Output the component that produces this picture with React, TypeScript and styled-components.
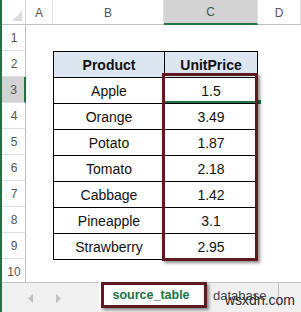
import React from "react";
import styled, { createGlobalStyle } from "styled-components";

const Global = createGlobalStyle`
  html, body { margin: 0; padding: 0; background: #ffffff; overflow: hidden; }
  body { font-family: "Liberation Sans", Arial, sans-serif; }
`;

const GREEN = "#217346";
const RED = "#5e1a1f";

const Page = styled.div`
  position: relative;
  width: 301px;
  height: 312px;
  box-sizing: border-box;
  border-left: 2px solid ${GREEN};
  display: flex;
  flex-direction: column;
  overflow: hidden;
  background: #ffffff;
`;

const Sheet = styled.div`
  height: 282px;
  flex: none;
  display: grid;
  grid-template-columns: 24px 27px 111px 94px 1fr;
  grid-template-rows: 25px repeat(10, 26px);
  overflow: hidden;
`;

const Corner = styled.div`
  grid-column: 1;
  grid-row: 1;
  box-sizing: border-box;
  border-bottom: 1px solid #bdbdbd;
  border-right: 1px solid #d4d4d4;
  background: #ffffff;
  display: flex;
  align-items: flex-end;
  justify-content: flex-end;
  padding: 0 3px 3px 0;
`;

const ColHead = styled.div<{ $col: number; $sel?: boolean }>`
  grid-column: ${(p) => p.$col};
  grid-row: 1;
  box-sizing: border-box;
  border-right: 1px solid #e0e0e0;
  border-bottom: ${(p) => (p.$sel ? `2px solid ${GREEN}` : "1px solid #bdbdbd")};
  background: ${(p) => (p.$sel ? "#d3d3d3" : "#ffffff")};
  color: ${(p) => (p.$sel ? "#3b5e4a" : "#555555")};
  font-size: 12px;
  display: flex;
  align-items: center;
  justify-content: center;
  padding-top: 1px;
`;

const RowHead = styled.div<{ $row: number; $sel?: boolean }>`
  grid-column: 1;
  grid-row: ${(p) => p.$row + 1};
  box-sizing: border-box;
  border-bottom: 1px solid #e0e0e0;
  border-right: ${(p) => (p.$sel ? `2px solid ${GREEN}` : "1px solid #bdbdbd")};
  background: ${(p) => (p.$sel ? "#d3d3d3" : "#ffffff")};
  color: #555555;
  font-size: 12px;
  display: flex;
  align-items: center;
  justify-content: center;
  padding-left: 1px;
`;

const Table = styled.div`
  grid-column: 3 / 5;
  grid-row: 3 / 11;
  align-self: start;
  display: grid;
  grid-template-columns: 110px 92px;
  grid-auto-rows: 25px;
  gap: 1px;
  padding: 1px;
  background: #000000;
  height: 209px;
  box-sizing: border-box;
`;

const Cell = styled.div<{ $head?: boolean }>`
  background: ${(p) => (p.$head ? "#dce6f1" : "#ffffff")};
  color: #111111;
  font-size: 14px;
  font-weight: ${(p) => (p.$head ? 700 : 400)};
  display: flex;
  align-items: center;
  justify-content: center;
  padding-top: 1px;
`;

const ActiveLine = styled.div`
  position: absolute;
  left: 162px;
  top: 101px;
  width: 94px;
  height: 2px;
  background: ${GREEN};
`;

const Handle = styled.div`
  position: absolute;
  left: 254px;
  top: 99px;
  width: 4px;
  height: 4px;
  background: ${GREEN};
  border: 1px solid #ffffff;
`;

const Highlight = styled.div<{ $l: number; $t: number; $w: number; $h: number }>`
  position: absolute;
  left: ${(p) => p.$l}px;
  top: ${(p) => p.$t}px;
  width: ${(p) => p.$w}px;
  height: ${(p) => p.$h}px;
  box-sizing: border-box;
  border: 3px solid ${RED};
  box-shadow: 2px 2px 3px rgba(0, 0, 0, 0.45);
  pointer-events: none;
`;

const TabBar = styled.div`
  flex: 1;
  display: flex;
  align-items: stretch;
  background: #f0f0f0;
  border-top: 1px solid #c6c6c6;
`;

const Nav = styled.div`
  width: 97px;
  display: flex;
  align-items: center;
  gap: 23px;
  padding-left: 26px;
  box-sizing: border-box;
  padding-top: 2px;
`;

const Tab = styled.div<{ $active?: boolean }>`
  display: flex;
  align-items: center;
  justify-content: center;
  box-sizing: border-box;
  font-size: ${(p) => (p.$active ? "12.5px" : "13px")};
  font-weight: ${(p) => (p.$active ? 700 : 400)};
  color: ${(p) => (p.$active ? GREEN : "#444444")};
  background: ${(p) => (p.$active ? "#ffffff" : "transparent")};
  width: ${(p) => (p.$active ? "104px" : "auto")};
  height: ${(p) => (p.$active ? "26px" : "auto")};
  margin-top: ${(p) => (p.$active ? "-1px" : "0")};
  padding: ${(p) => (p.$active ? "0" : "0 11px 0 10px")};
  border-right: ${(p) => (p.$active ? "none" : "1px solid #bdbdbd")};
  margin-bottom: ${(p) => (p.$active ? "0" : "5px")};
`;

const Watermark = styled.div`
  position: absolute;
  left: 223px;
  top: 292px;
  font-size: 14px;
  color: #2a2a2a;
  font-family: "Liberation Sans", Arial, sans-serif;
`;

const Arrow = ({ dir }: { dir: "l" | "r" }) => (
  <svg width="5" height="9" viewBox="0 0 5 9">
    {dir === "l" ? (
      <path d="M5 0 L0 4.5 L5 9 Z" fill="#c2c2c2" />
    ) : (
      <path d="M0 0 L5 4.5 L0 9 Z" fill="#c2c2c2" />
    )}
  </svg>
);

const rows: [string, string][] = [
  ["Apple", "1.5"],
  ["Orange", "3.49"],
  ["Potato", "1.87"],
  ["Tomato", "2.18"],
  ["Cabbage", "1.42"],
  ["Pineapple", "3.1"],
  ["Strawberry", "2.95"],
];

export default function App() {
  return (
    <>
      <Global />
      <Page>
        <Sheet>
          <Corner>
            <svg width="10" height="10" viewBox="0 0 10 10">
              <path d="M10 0 L10 10 L0 10 Z" fill="#dcdcdc" />
            </svg>
          </Corner>
          <ColHead $col={2}>A</ColHead>
          <ColHead $col={3}>B</ColHead>
          <ColHead $col={4} $sel>
            C
          </ColHead>
          <ColHead $col={5}>D</ColHead>
          {Array.from({ length: 10 }, (_, i) => (
            <RowHead key={i} $row={i + 1} $sel={i === 2}>
              {i + 1}
            </RowHead>
          ))}
          <Table>
            <Cell $head>Product</Cell>
            <Cell $head>UnitPrice</Cell>
            {rows.map(([p, v]) => (
              <React.Fragment key={p}>
                <Cell>{p}</Cell>
                <Cell>{v}</Cell>
              </React.Fragment>
            ))}
          </Table>
        </Sheet>
        <TabBar>
          <Nav>
            <Arrow dir="l" />
            <Arrow dir="r" />
          </Nav>
          <Tab $active>source_table</Tab>
          <Tab>database</Tab>
        </TabBar>
        <ActiveLine />
        <Handle />
        <Highlight $l={160} $t={73} $w={96} $h={188} />
        <Highlight $l={99} $t={282} $w={106} $h={26} />
        <Watermark>wsxdn.com</Watermark>
      </Page>
    </>
  );
}
